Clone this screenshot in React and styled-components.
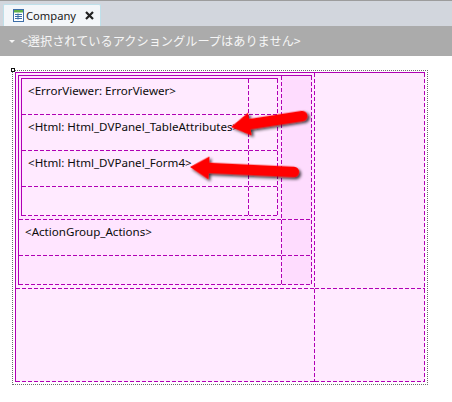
import styled, { createGlobalStyle, css } from "styled-components";

const LINE = "#b000b4";

const GlobalStyle = createGlobalStyle`
  html, body {
    margin: 0;
    padding: 0;
    background: #ffffff;
  }
  body {
    font-family: "Noto Sans", "Liberation Sans", sans-serif;
  }
`;

// dashed right + bottom edge of a designer cell
const dashedEdges = css`
  background-image:
    repeating-linear-gradient(to bottom, ${LINE} 0 4px, transparent 4px 6px),
    repeating-linear-gradient(to right, ${LINE} 0 4px, transparent 4px 6px);
  background-size: 1px 100%, 100% 1px;
  background-position: right top, left bottom;
  background-repeat: no-repeat;
`;

const Page = styled.div`
  width: 452px;
  height: 402px;
  overflow: hidden;
  display: flex;
  flex-direction: column;
`;

const TabBar = styled.div`
  height: 26px;
  box-sizing: border-box;
  border-top: 1px solid #9c9c9c;
  background: #d2d6dd;
  display: flex;
  align-items: flex-end;
  padding-left: 3px;
`;

const Tab = styled.div`
  width: 98px;
  height: 22px;
  box-sizing: border-box;
  background: #f3f6f9;
  border: 1px solid #bfe0ea;
  border-bottom: none;
  border-radius: 2px 2px 0 0;
  display: flex;
  align-items: center;
  padding-left: 9px;
  gap: 2px;
`;

const TabLabel = styled.span`
  font-family: "Noto Sans", "Liberation Sans", sans-serif;
  font-size: 11.2px;
  color: #1b1b1b;
  width: 57px;
  flex: none;
`;

const Toolbar = styled.div`
  height: 30px;
  background: #ababab;
  display: flex;
  align-items: center;
  padding-left: 9px;
  gap: 6px;
  color: #f6f6f6;
  font-family: "Noto Sans CJK JP", "Noto Sans", sans-serif;
  font-size: 12.2px;
`;

const Caret = styled.span`
  width: 0;
  height: 0;
  border-left: 3px solid transparent;
  border-right: 3px solid transparent;
  border-top: 3px solid #f6f6f6;
  margin-top: 1px;
`;

const Canvas = styled.div`
  position: relative;
  flex: 1;
  padding: 14px 0 0 12px;
`;

const Frame = styled.div`
  position: relative;
  width: 416px;
  box-sizing: border-box;
  border: 1px dotted #6b6b6b;
  padding: 1px 2px 2px 2px;
`;

const Handle = styled.div`
  position: absolute;
  left: -2px;
  top: -3px;
  width: 4px;
  height: 4px;
  box-sizing: border-box;
  border: 1px solid #111;
  background: #fff;
`;

const Table = styled.div`
  display: grid;
  grid-template-columns: ${(p) => p.$cols};
  grid-template-rows: ${(p) => p.$rows};
  border-top: 1px solid ${LINE};
  border-left: 1px solid ${LINE};
  width: max-content;
`;

const Cell = styled.div`
  ${dashedEdges};
  background-color: ${(p) => p.$bg || "#ffeaff"};
  padding: ${(p) => (p.$nested ? "2px 0 0 2px" : "0")};
  min-width: 0;
  overflow: hidden;
`;

const Label = styled.div`
  font-family: "Noto Sans", "Liberation Sans", sans-serif;
  font-size: 11.6px;
  line-height: 13px;
  color: #0c0c0c;
  padding: 5px 0 0 6px;
  white-space: nowrap;
`;

const Overlay = styled.svg`
  position: absolute;
  left: 0;
  top: 0;
  pointer-events: none;
`;

const TableIcon = () => (
  <svg width="11" height="13" viewBox="0 0 11 13">
    <rect x="0.5" y="0.5" width="10" height="12" fill="#ffffff" stroke="#3d6ea8" />
    <rect x="1" y="1" width="9" height="2.5" fill="#5fae4a" />
    <path d="M2 5.5h7M2 7.5h7M2 9.5h7M5 4.5v6" stroke="#3d6ea8" strokeWidth="1" />
  </svg>
);

const CloseIcon = () => (
  <svg width="9" height="9" viewBox="0 0 9 9">
    <path d="M1 1L8 8M8 1L1 8" stroke="#222" strokeWidth="2.2" />
  </svg>
);

const Arrow = ({ x, y, angle, length }) => (
  <g transform={`translate(${x},${y}) rotate(${angle})`} filter="url(#shadow)">
    <line x1="16" y1="0" x2={length} y2="0" stroke="#ff0000" strokeWidth="10.5" strokeLinecap="round" />
    <polygon points="0,0 19,-11.5 19,11.5" fill="#ff0000" />
  </g>
);

const App = () => {
  return (
    <Page>
      <GlobalStyle />
      <TabBar>
        <Tab>
          <TableIcon />
          <TabLabel>Company</TabLabel>
          <CloseIcon />
        </Tab>
      </TabBar>
      <Toolbar>
        <Caret />
        <span>&lt;選択されているアクショングループはありません&gt;</span>
      </Toolbar>
      <Canvas>
        <Frame>
          <Handle />
          <Table $cols="299px 110px" $rows="216px 93px">
            <Cell $nested>
              <Table $cols="263px 30px" $rows="144px 36px 29px">
                <Cell $nested $bg="#ffe2ff">
                  <Table $cols="227px 29px" $rows="36px 36px 36px 29px">
                    <Cell><Label>&lt;ErrorViewer: ErrorViewer&gt;</Label></Cell>
                    <Cell />
                    <Cell><Label>&lt;Html: Html_DVPanel_TableAttributes&gt;</Label></Cell>
                    <Cell />
                    <Cell><Label>&lt;Html: Html_DVPanel_Form4&gt;</Label></Cell>
                    <Cell />
                    <Cell />
                    <Cell />
                  </Table>
                </Cell>
                <Cell $bg="#fedcfe" />
                <Cell $bg="#ffe5ff">
                  <Label>&lt;ActionGroup_Actions&gt;</Label>
                </Cell>
                <Cell $bg="#fedcfe" />
                <Cell $bg="#ffe5ff" />
                <Cell $bg="#fedcfe" />
              </Table>
            </Cell>
            <Cell />
            <Cell />
            <Cell />
          </Table>
        </Frame>
        <Overlay width="452" height="346" viewBox="0 56 452 346">
          <defs>
            <filter id="shadow" x="-20%" y="-50%" width="140%" height="200%">
              <feDropShadow dx="2" dy="2" stdDeviation="1.6" floodColor="#000" floodOpacity="0.75" />
            </filter>
          </defs>
          <Arrow x={231} y={127} angle={-8.8} length={72} />
          <Arrow x={190} y={167} angle={2.7} length={104} />
        </Overlay>
      </Canvas>
    </Page>
  );
};

export default App;
